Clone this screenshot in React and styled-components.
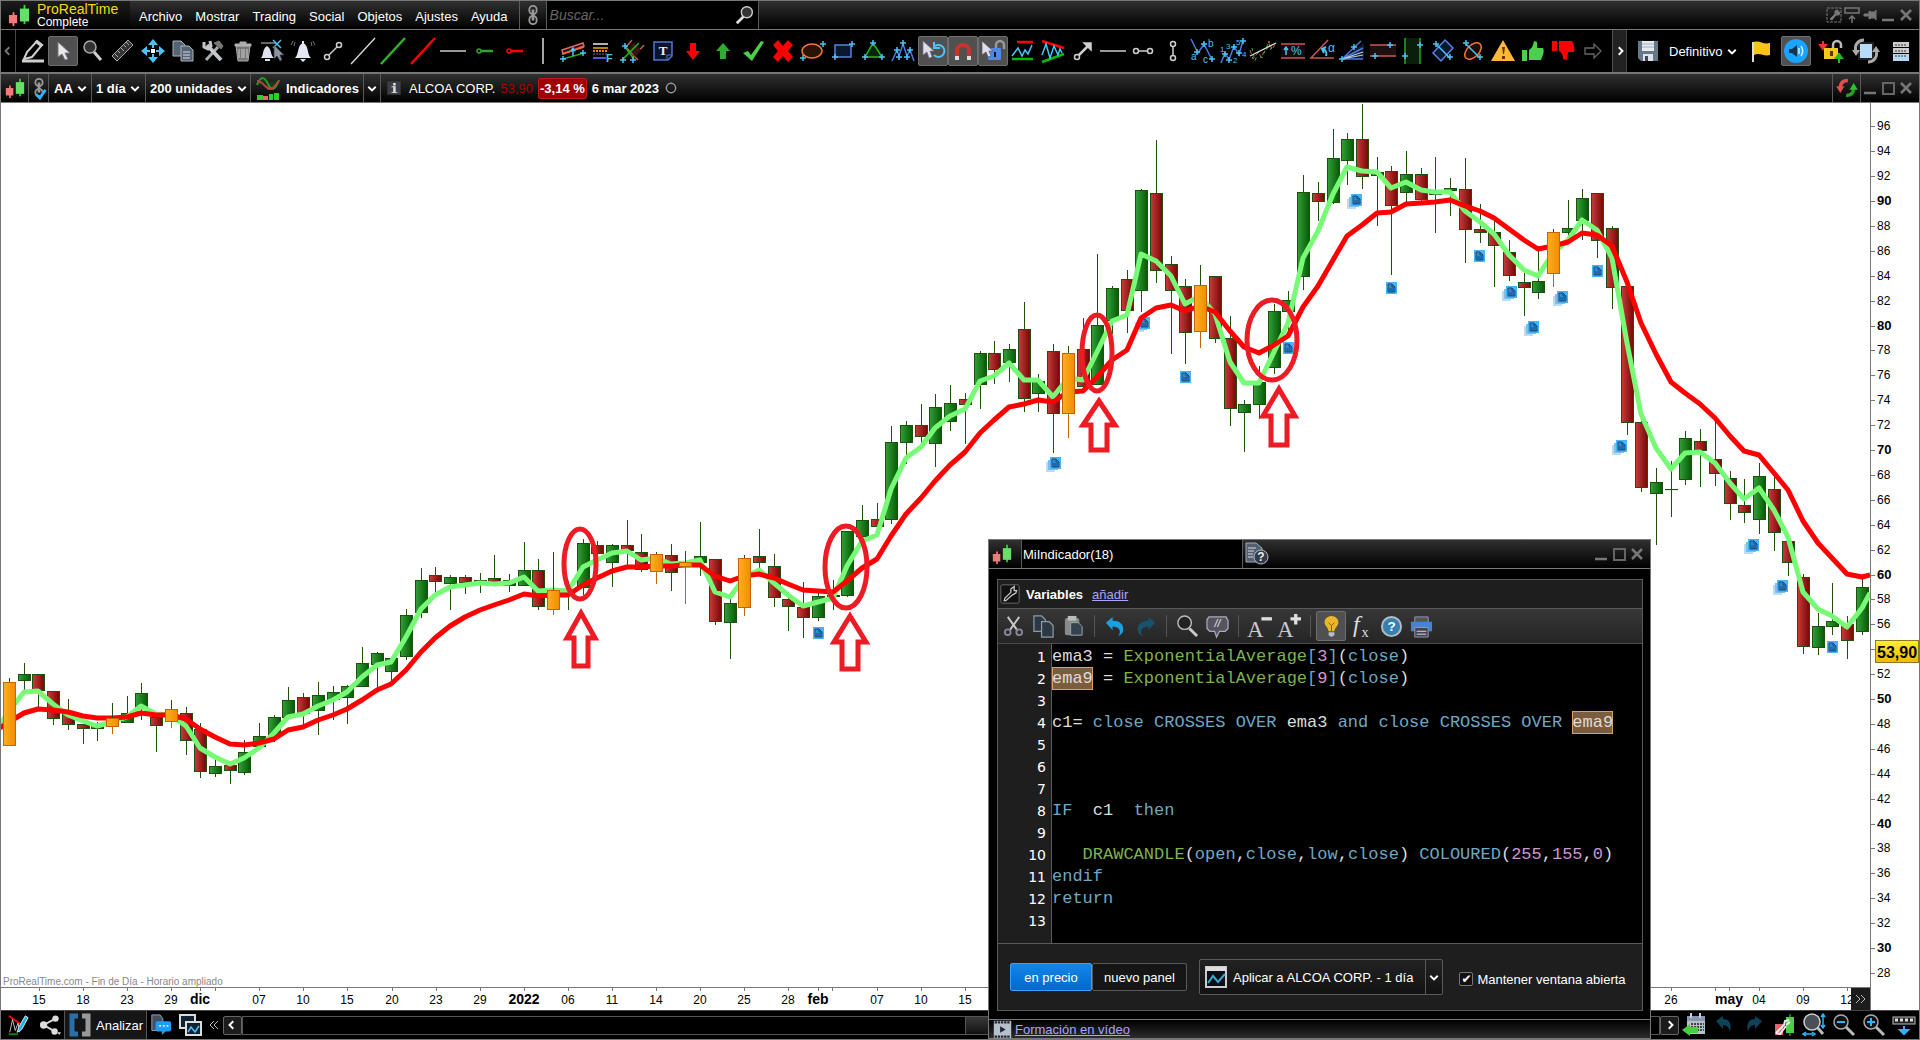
import React, { useState } from 'react';
import styled, { createGlobalStyle, css } from 'styled-components';

const GlobalStyle = createGlobalStyle`
  * {
    box-sizing: border-box;
  }
  body {
    margin: 0;
    background: #000;
    font-family: "Liberation Sans", Arial, sans-serif;
    font-size: 13px;
    color: #fff;
  }
  button, input, select {
    font: inherit;
    color: inherit;
  }
`;

const barGradient = 'linear-gradient(#303030, #000)';

/* ---------- icons ---------- */

const cyan = '#4cc4f5';
const grey = '#cfcfcf';
const steel = '#a9b3bd';

const Plus = ({ x, y }) => (
  <path d={`M${x - 3} ${y}h6M${x} ${y - 3}v6`} stroke={cyan} strokeWidth="1.5" />
);

const cursor = 'M7 3v15l4-3 3 6 3-1-3-6h5z';

const icons = {
  candles: (
    <>
      <path d="M6 9v15" stroke="#f77" strokeWidth="2" />
      <path d="M18 1v21" stroke="#3d3" strokeWidth="2" />
      <rect x="1" y="12" width="9" height="9" fill="#f27a7a" />
      <rect x="13" y="5" width="10" height="14" fill="#66e066" />
    </>
  ),
  chain: (
    <g fill="none" stroke="#999" strokeWidth="2">
      <rect x="8" y="2" width="8" height="9" rx="4" />
      <rect x="8" y="13" width="8" height="9" rx="4" />
      <path d="M12 6v12" strokeWidth="3" />
    </g>
  ),
  chainCheck: (
    <g fill="none" stroke="#999" strokeWidth="2">
      <rect x="8" y="2" width="8" height="8" rx="4" />
      <rect x="8" y="13" width="8" height="8" rx="4" />
      <path d="M12 6v11" strokeWidth="3" />
      <path d="M9 19l4 4 6-9" stroke="#2ab4ff" strokeWidth="3" />
    </g>
  ),
  search: (
    <>
      <path d="M11 13L3 21" stroke="#ddd" strokeWidth="3" />
      <circle cx="14" cy="9" r="6" fill="#333" stroke="#ccc" strokeWidth="1.5" />
    </>
  ),
  pencil: (
    <g fill="none" stroke={grey} strokeWidth="2">
      <path d="M3 20l3-7L16 2l5 4-10 12z" />
      <path d="M15 3l5 4 1-1-5-4z" fill={grey} />
      <path d="M1 22h22" strokeWidth="3" />
    </g>
  ),
  pointer: <path d={cursor} fill="#e8e8ee" stroke="#777" />,
  loupe: (
    <>
      <path d="M13 13l7 8" stroke={grey} strokeWidth="3" />
      <circle cx="9" cy="8" r="6" fill="#333" stroke="#aaa" strokeWidth="1.5" />
    </>
  ),
  ruler: (
    <g fill="#333" stroke="#aaa">
      <path d="M1 17L17 1l5 5L6 22z" />
      <path d="M4 15l3 3M7 12l2 2M10 9l3 3M13 6l2 2M15 3l3 3" />
    </g>
  ),
  move: (
    <g fill={cyan}>
      <path d="M12 0l5 6H7zM12 24l5-6H7zM0 12l6-5v10zM24 12l-6-5v10z" />
      <path d="M11 5h2v4h-2zM11 15h2v4h-2zM5 11h4v2H5zM15 11h4v2h-4z" />
      <rect x="10" y="10" width="4" height="4" fill="#fff" />
    </g>
  ),
  copy: (
    <g fill="#566373" stroke={steel}>
      <path d="M2 2h8l4 4v11H2z" />
      <path d="M10 7h8l4 4v11H10z" />
      <path d="M12 13h7M12 16h7M12 19h7" stroke="#dde" />
    </g>
  ),
  tools: (
    <g stroke="#aaa" strokeWidth="3" fill="none">
      <path d="M5 21L17 8" />
      <path d="M6 6l14 15" strokeWidth="4" stroke="#c4c8cc" />
      <path d="M13 4l7 6 2-3-4-5z" fill="#777" stroke="#777" strokeWidth="1" />
      <path d="M3 3v5l4 2 3-3-1-5" stroke="#c4c8cc" />
    </g>
  ),
  trash: (
    <g fill="#777" stroke="#aaa">
      <path d="M5 7h14l-2 15H7z" />
      <path d="M8 10v9M11 10v9M13 10v9M16 10v9" stroke="#ccc" />
      <path d="M4 5h16v2H4zM9 3h6v2H9z" fill="#bbb" />
    </g>
  ),
  alarm: (
    <>
      <path d="M0 4h15" stroke="#ccc" />
      <path d="M12 1l8 8M20 1l-8 8" stroke={cyan} strokeWidth="1.5" />
      <path d="M0 19c3-3 1-9 6-12 5 3 3 9 7 12zM4 20h5v2H4z" fill="#dfe3ee" />
      <path d="M13 6v14l3-3 3 5 2-1-2-5h4z" fill="#8a94a4" stroke="#333" strokeWidth=".7" />
    </>
  ),
  bell: (
    <>
      <path d="M4 19c4-3 2-13 8-15 6 2 4 12 8 15zM9 20h6l-3 3zM11 2h2v3h-2z" fill="#e3e8f2" />
      <path d="M4 3L3 7M2 2L0 6M20 3l1 4M22 2l2 4" stroke="#777" />
    </>
  ),
  node: (
    <g fill="none" stroke={grey} strokeWidth="1.5">
      <circle cx="6" cy="18" r="2.5" />
      <circle cx="18" cy="6" r="2.5" />
      <path d="M8 16l8-8" />
    </g>
  ),
  line: <path d="M0 25L24-1" stroke="#ddd" strokeWidth="1.3" />,
  greenLine: <path d="M0 25L24-1" stroke="#2fb02f" strokeWidth="2.5" />,
  redLine: <path d="M0 25L24-1" stroke="#f00" strokeWidth="2.5" />,
  hline: <path d="M-1 12h26" stroke="#ccc" strokeWidth="1.5" />,
  greenRay: (
    <g stroke="#2fa52f" strokeWidth="1.5" fill="none">
      <circle cx="8" cy="12" r="2" />
      <path d="M10 12h12" strokeWidth="2.5" />
    </g>
  ),
  redRay: (
    <g stroke="#f00" strokeWidth="1.5" fill="none">
      <circle cx="8" cy="12" r="2" />
      <path d="M10 12h12" strokeWidth="2.5" />
    </g>
  ),
  separator: <path d="M12-1v26" stroke="#ddd" strokeWidth="1.5" />,
  channel: (
    <g fill="none" strokeWidth="1.5">
      <path d="M1 11l21-7 1 3L2 15z" fill="#2a1112" stroke="#d66" />
      <path d="M1 15l22-7" stroke="#f63" />
      <path d="M2 20l21-6" stroke="#2a2" />
      <path d="M12 17V9m-2 3l2-3 2 3" stroke={cyan} />
      <Plus x={2} y={20} />
      <Plus x={22} y={14} />
    </g>
  ),
  fibo: (
    <>
      <path d="M2 5h15" stroke="#eee" strokeWidth="1.5" />
      <path d="M2 8h15v2H2z" fill="#a80" />
      <path d="M2 12h15" stroke="#f73" strokeDasharray="2 1" strokeWidth="2" />
      <path d="M2 15h15" stroke="#777" strokeDasharray="2 1" />
      <path d="M2 19h13" stroke="#55d" strokeWidth="2" />
      <text x="15" y="23" fill={cyan} fontSize="11" fontWeight="bold">F</text>
    </>
  ),
  pitchfork: (
    <g fill="none" strokeWidth="1.5">
      <path d="M5 8l6-7M11 19l12-13M5 8l12 13" stroke="#c55" />
      <path d="M8 9l5-6 7 8-6 7z" fill="#351516" />
      <path d="M1 21L18 4M4 8l9 12" stroke="#2b2" />
      <Plus x={4} y={7} />
      <Plus x={2} y={21} />
      <Plus x={12} y={21} />
    </g>
  ),
  textBox: (
    <>
      <path d="M3 3h18v14l-4 4H3z" fill="#0a1430" stroke="#5078c8" strokeWidth="1.5" />
      <path d="M21 16h-5v5" fill="none" stroke="#5078c8" />
      <text x="12" y="16" fill="#eee" fontSize="13" fontWeight="bold" textAnchor="middle" fontFamily="Liberation Serif">T</text>
    </>
  ),
  arrowDown: <path d="M9 4h6v8h4l-7 9-7-9h4z" fill="#f00" />,
  arrowUp: <path d="M9 20h6v-8h4l-7-8-7 8h4z" fill="#2fae2f" />,
  check: <path d="M2 14l5-2 3 4L20 2l3 1-12 19z" fill="#4ccf4c" />,
  cross: <path d="M2 6l5-5 5 6 5-6 5 5-5 6 5 6-5 5-5-6-5 6-5-5 5-6z" fill="#f00" />,
  ellipse: (
    <>
      <ellipse cx="11" cy="12" rx="10" ry="7" fill="#291305" stroke="#f07830" strokeWidth="1.5" />
      <Plus x={22} y={5} />
      <Plus x={2} y={19} />
    </>
  ),
  rect: (
    <>
      <rect x="4" y="6" width="16" height="12" fill="#0c1830" stroke="#5882e0" strokeWidth="1.5" />
      <Plus x={21} y={5} />
      <Plus x={4} y={18} />
    </>
  ),
  triangle: (
    <>
      <path d="M12 4l9 14H4z" fill="#0c220c" stroke="#2b2" strokeWidth="1.5" />
      <Plus x={12} y={4} />
      <Plus x={4} y={18} />
      <Plus x={21} y={18} />
    </>
  ),
  peaks: (
    <>
      <path d="M1 22l5-11 2 6 4-12 4 12 3-6 4 11" fill="none" stroke="#4a7ae0" strokeWidth="1.5" />
      <Plus x={12} y={4} />
      <Plus x={6} y={11} />
      <Plus x={19} y={11} />
      <Plus x={8} y={18} />
      <Plus x={16} y={18} />
    </>
  ),
  cursorBack: (
    <>
      <path d="M2 2v14l4-3 2 6 3-1-2-6h4z" fill="#dde" stroke="#777" strokeWidth=".7" />
      <path d="M14 7a6 6 0 1 1-1 9M13 3v6h6" fill="none" stroke={cyan} strokeWidth="2" />
    </>
  ),
  magnet: (
    <>
      <path d="M6 20v-8a6 6 0 0 1 12 0v8" fill="none" stroke="#c8342c" strokeWidth="4" />
      <path d="M4 17h4v4H4zM16 17h4v4h-4z" fill="#ddd" />
    </>
  ),
  cursorLock: (
    <>
      <path d="M15 9V6a4 4 0 0 1 8 0v4" fill="none" stroke="#999" strokeWidth="2.5" />
      <rect x="7" y="9" width="13" height="12" rx="1" fill="#4d8ae8" />
      <path d="M1 2v14l4-3 2 5 3-1-2-5h4z" fill="#dde" stroke="#555" strokeWidth=".7" />
      <path d="M13 13h2v5h-2z" fill="#012" />
    </>
  ),
  range: (
    <>
      <path d="M6 3h16" stroke="#f00" strokeWidth="2.5" />
      <path d="M1 20h21" stroke="#0b0" strokeWidth="2.5" />
      <path d="M1 17l6-8 4 8 3-6 3 4 4-9" fill="none" stroke={cyan} strokeWidth="1.5" />
    </>
  ),
  wedge: (
    <>
      <path d="M1 2l22 7" stroke="#f00" strokeWidth="2.5" />
      <path d="M1 23l22-8" stroke="#0b0" strokeWidth="2.5" />
      <path d="M1 16L5 5l4 14 4-12 4 9 2-6 2 4" fill="none" stroke={cyan} strokeWidth="1.5" />
    </>
  ),
  arrow: (
    <g stroke={grey} fill="none" strokeWidth="1.5">
      <circle cx="6" cy="18" r="2.5" />
      <path d="M8 16l9-9" strokeWidth="2.5" />
      <path d="M13 4h7v7z" fill={grey} />
    </g>
  ),
  segment: (
    <g stroke={grey} fill="none" strokeWidth="1.5">
      <circle cx="5" cy="12" r="2.5" />
      <circle cx="19" cy="12" r="2.5" />
      <path d="M8 12h8" />
    </g>
  ),
  vsegment: (
    <g stroke={grey} fill="none" strokeWidth="1.5">
      <circle cx="12" cy="5" r="2.5" />
      <circle cx="12" cy="19" r="2.5" />
      <path d="M12 8v8" />
    </g>
  ),
  abc: (
    <>
      <path d="M0 0l7 14 6-9 8 16" fill="none" stroke="#4a7ae0" strokeWidth="1.5" />
      <Plus x={6} y={13} />
      <Plus x={13} y={5} />
      <Plus x={21} y={20} />
      <g fill={cyan} fontSize="10">
        <text x="0" y="21">a</text>
        <text x="17" y="8">b</text>
        <text x="12" y="24">c</text>
      </g>
    </>
  ),
  waves: (
    <>
      <path d="M0 24l4-10 4 7 5-14 5 9 4-15" fill="none" stroke="#4a7ae0" strokeWidth="1.5" />
      <Plus x={4} y={15} />
      <Plus x={8} y={21} />
      <Plus x={13} y={8} />
      <Plus x={18} y={14} />
      <Plus x={22} y={2} />
      <g fill={cyan} fontSize="8">
        <text x="-1" y="13">1</text>
        <text x="5" y="10">3</text>
        <text x="12" y="24">2</text>
        <text x="15" y="6">5</text>
        <text x="21" y="18">4</text>
      </g>
    </>
  ),
  regression: (
    <>
      <path d="M-1 11l3 9 3-4 3-3 2 6 3-6 3-3 2-8 3 9 4-8" fill="none" stroke="#c55" strokeDasharray="4 3" />
      <path d="M1 9l3 13 3-9 4 6 4-10 3-6 1 8 4-6" fill="none" stroke="#3b3" strokeDasharray="3 4" />
      <path d="M-1 17L25 4" stroke="#ddd" strokeWidth="1.3" />
    </>
  ),
  percent: (
    <>
      <rect x="0" y="5" width="24" height="14" fill="#180a0a" />
      <path d="M0 5h24M0 19h24" stroke="#c55" strokeWidth="1.5" />
      <path d="M5 16V8m-2 3l2-3 2 3" fill="none" stroke={cyan} strokeWidth="1.5" />
      <text x="10" y="16" fontSize="12" fill={cyan}>%</text>
    </>
  ),
  angle: (
    <>
      <path d="M17 1L0 19h23" fill="none" stroke="#c55" strokeWidth="1.5" />
      <path d="M15 17c1-3 0-6-3-7m3-2l-4 2 2 4" fill="none" stroke={cyan} strokeWidth="2" />
      <text x="17" y="13" fontSize="12" fill={cyan}>α</text>
    </>
  ),
  fan: (
    <>
      <path d="M1 20L23 4v16z" fill="#0c1c30" />
      <path d="M1 20L20 2M1 20h21M1 20l21-11" stroke="#4a7ae0" strokeWidth="1.5" />
      <path d="M1 20l21-7M1 20l21-4" stroke="#bcd" strokeWidth="1.2" />
      <Plus x={1} y={20} />
      <Plus x={13} y={8} />
    </>
  ),
  hband: (
    <>
      <rect x="-1" y="6" width="26" height="11" fill="#1f1010" />
      <path d="M-1 6h26M-1 17h26" stroke="#c55" strokeWidth="1.5" />
      <Plus x={19} y={6} />
      <Plus x={4} y={17} />
    </>
  ),
  vband: (
    <>
      <rect x="4" y="-1" width="15" height="26" fill="#0a1f0a" />
      <path d="M4-1v26M19-1v26" stroke="#2a2" strokeWidth="1.5" />
      <Plus x={19} y={6} />
      <Plus x={4} y={17} />
    </>
  ),
  diamond: (
    <>
      <path d="M14 1l8 8-12 13-8-8z" fill="#0c1830" stroke="#5882e0" strokeWidth="1.5" />
      <path d="M5 5l14 14" stroke={cyan} strokeWidth="1.5" />
      <Plus x={5} y={5} />
      <Plus x={19} y={18} />
    </>
  ),
  tiltEllipse: (
    <>
      <ellipse cx="12" cy="12" rx="10" ry="6" transform="rotate(-45 12 12)" fill="#1c0d05" stroke="#f07830" strokeWidth="1.5" />
      <path d="M5 5l14 14" stroke={cyan} strokeWidth="1.5" />
      <Plus x={5} y={4} />
      <Plus x={19} y={18} />
    </>
  ),
  warning: (
    <>
      <path d="M12 1l12 21H0z" fill="#ffb838" />
      <path d="M11 8h3l-1 7h-1zM11 17h3v3h-3z" fill="#5a3800" />
    </>
  ),
  thumbUp: <path d="M1 11h5v11H1zM8 11c4-3 4-5 5-9l3 1v6h6c2 4-1 9-2 12H8z" fill="#4ccf4c" />,
  thumbDown: <path d="M1 2h5v10H1zM8 2h13c2 3 3 8 2 11h-6l-1 8-4-1c0-4-1-6-4-8z" fill="#f00" />,
  arrowOutline: <path d="M4 9h9V5l7 7-7 7v-4H4z" fill="none" stroke="#666" strokeWidth="1.3" />,
  floppy: (
    <>
      <path d="M2 2h20v20H5l-3-3z" fill="#68788a" />
      <path d="M6 2h12v10H6z" fill="#e8ecf0" />
      <path d="M6 5h12M6 8h12" stroke="#9ab" />
      <path d="M7 15h10v7H7z" fill="#dde4ea" />
      <path d="M9 17h3v5H9z" fill="#445" />
    </>
  ),
  flag: (
    <>
      <path d="M4 3v20" stroke="#ddd" strokeWidth="2" />
      <path d="M5 3c6-2 9 3 16 1v12c-6 2-10-3-16 0z" fill="#fcc419" />
    </>
  ),
  sound: (
    <>
      <circle cx="12" cy="12" r="12" fill="#1aa3ff" />
      <path d="M5 10h3l5-4v12l-5-4H5z" fill="#13324f" />
      <path d="M15 9v6M17 7c2 3 2 7 0 10" fill="none" stroke="#d8f0ff" strokeWidth="1.5" />
    </>
  ),
  lockArrows: (
    <>
      <path d="M4 2v7M1 6l3 4 3-4z" stroke="#e33" fill="#e33" strokeWidth="2" />
      <path d="M14 9V6a4 4 0 0 1 8 0v3" fill="none" stroke="#bbb" strokeWidth="2.5" />
      <rect x="5" y="9" width="14" height="11" fill="#f7c81c" />
      <path d="M11 12h3v5h-3z" fill="#630" />
      <path d="M20 24v-8m-3 3l3-4 3 4z" stroke="#2b2" fill="#2b2" strokeWidth="2" />
    </>
  ),
  syncPage: (
    <>
      <rect x="5" y="4" width="14" height="16" fill="#b8dcf8" stroke="#222" strokeWidth="2" />
      <path d="M2 13C0 6 4 1 10 1M22 11c2 7-2 12-8 12" fill="none" stroke="#aaa" strokeWidth="3" />
      <path d="M-2 11h8l-4 6zM26 13h-8l4-6z" fill="#aaa" />
    </>
  ),
  keypad: (
    <>
      <path d="M4 3h16v5H4zM4 9h16v5H4z" fill="#ccc" />
      <path d="M4 15h16v7H4z" fill="#b6d8f4" />
      <path d="M6 6h12M6 12h12M6 17h12" stroke="#333" strokeDasharray="2 1" />
    </>
  ),
  indicators: (
    <>
      <path d="M1 9C5-1 9 1 12 8s7 7 11-4" fill="#153a15" stroke="#2a9a2a" strokeWidth="2" />
      <path d="M1 5c5 0 8 6 12 8 4 1 7-5 10-8" fill="none" stroke="#b84040" strokeWidth="2" />
      <path d="M1 19h6v5H1zM13 18h4v6h-4zM18 17h5v7h-5z" fill="#2ecc2e" />
      <path d="M7 20h5v4H7z" fill="#e66" />
    </>
  ),
  info: (
    <>
      <rect x="4" y="4" width="16" height="16" fill="#3e3e48" />
      <path d="M11 6h3v3h-3zM9 10h5v7h2v1H9v-1h2v-6H9z" fill="#ddd" />
    </>
  ),
  ring: <circle cx="12" cy="12" r="8" fill="none" stroke="#999" strokeWidth="2.5" />,
  refresh: (
    <>
      <path d="M4 12c0-6 3-9 9-9" fill="none" stroke="#e05050" strokeWidth="4" />
      <path d="M-1 10h10l-5 8z" fill="#e05050" />
      <path d="M20 12c0 6-3 9-9 9" fill="none" stroke="#22a322" strokeWidth="4" />
      <path d="M25 14H15l5-8z" fill="#2fc02f" />
    </>
  ),
  adjust: (
    <g fill="none" stroke="#777">
      <rect x="5" y="5" width="14" height="14" strokeDasharray="3 1" />
      <path d="M8 16l5-5v-3l3-1v2h2l-1 3h-3l-4 5z" fill="#777" />
    </g>
  ),
  dock: (
    <g fill="none" stroke="#777" strokeWidth="1.5">
      <rect x="5" y="5" width="14" height="5" />
      <path d="M12 20v-7m-3 3l3-3 3 3" />
    </g>
  ),
  pin: <path d="M6 11h5V8l2 1h4l1-2v10l-1-2h-4l-2 1v-3H6z" fill="#777" stroke="#777" />,
  minimize: <path d="M6 17h12" stroke="#777" strokeWidth="2.5" />,
  maximize: <rect x="7" y="7" width="11" height="11" fill="none" stroke="#666" strokeWidth="2" />,
  close: <path d="M7 7l10 10M17 7L7 17" stroke="#777" strokeWidth="2.5" />,
  chartPen: (
    <>
      <path d="M2 2l14 10" stroke="#f00" strokeWidth="2" />
      <path d="M3 20L6 6l3 12 3-8 2 10" fill="none" stroke="#ccc" />
      <path d="M2 22h10" stroke="#080" strokeWidth="2" />
      <path d="M11 20l2-6 7-12 3 2-7 13z" fill="#19b3e6" stroke="#eee" />
    </>
  ),
  share: (
    <>
      <path d="M18 5L5 12l12 7" fill="none" stroke="#ddd" strokeWidth="2" />
      <circle cx="18" cy="5" r="3.5" fill="#ddd" />
      <circle cx="5" cy="12" r="4" fill="#ddd" />
      <circle cx="17" cy="19" r="3.5" fill="#ddd" />
      <path d="M20 20h4l-2 3z" fill="#ddd" />
    </>
  ),
  brackets: (
    <g fill="none" strokeWidth="5">
      <path d="M10 3H4v18h6" stroke="#2a6fa8" />
      <path d="M14 3h6v18h-6" stroke="#999" />
    </g>
  ),
  chat: (
    <>
      <path d="M2 1h9l3 4v13H2z" fill="#445060" stroke="#9ab" />
      <path d="M8 8h13q2 0 2 2v7q0 2-2 2h-4l-4 4v-4H8q-2 0-2-2v-7q0-2 2-2z" fill="#1f9cf5" />
      <path d="M10 13h10" stroke="#cef" strokeWidth="2" strokeDasharray="2 2" />
    </>
  ),
  windows: (
    <>
      <rect x="2" y="2" width="15" height="13" fill="#123" stroke="#ddd" strokeWidth="2" />
      <rect x="8" y="9" width="15" height="13" fill="#123" stroke="#ddd" strokeWidth="2" />
      <path d="M10 19l3-5 4 5 4-6" fill="none" stroke={cyan} strokeWidth="1.5" />
    </>
  ),
  chartWindow: (
    <>
      <rect x="2" y="2" width="20" height="20" fill="#0b0f14" stroke="#ccc" strokeWidth="2" />
      <path d="M2 2h20v4H2z" fill="#ddd" />
      <path d="M4 18l5-7 5 6 7-8" fill="none" stroke="#3aa8d0" strokeWidth="2" />
    </>
  ),
  calendar: (
    <>
      <path d="M5 3h18v18H5z" fill="#b8bfc8" />
      <path d="M5 3h18v5H5z" fill="#8898ac" />
      <path d="M9 11h13M9 14h13M9 17h13" stroke="#444" strokeDasharray="2 1" strokeWidth="2" />
      <path d="M9 0v5M18 0v5" stroke="#ccd" strokeWidth="2" />
      <path d="M0 17l8-6v3h8v6H8v3z" fill="#43d143" />
    </>
  ),
  undoDark: <path d="M4 8l7-5v3c6 0 9 4 7 13-1-5-3-7-7-7v4z" fill="#0d4358" />,
  redoDark: <path d="M20 8l-7-5v3C7 6 4 10 6 19c1-5 3-7 7-7v4z" fill="#0d4358" />,
  candleTool: (
    <>
      <path d="M3 11h8v11H3z" fill="#d66" />
      <path d="M14 4h8v16h-8z" fill="#46d146" />
      <path d="M18 1v22" stroke="#46d146" />
      <path d="M4 20l8-8 1-4 4-1m-3 5l4-3M4 20l4 1 6-8" fill="none" stroke="#eee" strokeWidth="2" />
    </>
  ),
  zoomAxes: (
    <>
      <path d="M15 14l6 7" stroke="#bbb" strokeWidth="3" />
      <circle cx="10" cy="9" r="8" fill="#4a4e55" stroke="#ccc" strokeWidth="1.5" />
      <path d="M21 2v12M19 4l2-3 2 3M19 12l2 3 2-3M2 21h9M4 19l-3 2 3 2M10 19l3 2-3 2" fill="none" stroke="#29b6ff" strokeWidth="1.5" />
    </>
  ),
  zoomOut: (
    <>
      <path d="M14 14l8 8" stroke="#bbb" strokeWidth="3" />
      <circle cx="9" cy="9" r="7" fill="#111" stroke="#aaa" strokeWidth="1.5" />
      <path d="M5 9h8" stroke="#29b6ff" strokeWidth="2" />
    </>
  ),
  zoomIn: (
    <>
      <path d="M14 14l8 8" stroke="#bbb" strokeWidth="3" />
      <circle cx="9" cy="9" r="7" fill="#111" stroke="#aaa" strokeWidth="1.5" />
      <path d="M5 9h8M9 5v8" stroke="#29b6ff" strokeWidth="2" />
    </>
  ),
  keyboardDown: (
    <>
      <rect x="1" y="4" width="22" height="7" fill="#222" stroke="#bbb" />
      <path d="M3 7h18" stroke="#ddd" strokeWidth="3" strokeDasharray="3 2" />
      <path d="M12 13v5m-4-1l4 4 4-4z" stroke="#29b6ff" fill="#29b6ff" strokeWidth="2" />
    </>
  ),
  help: (
    <>
      <path d="M1 1h10l6 5v14H1z" fill="#56606c" stroke="#9ab" />
      <path d="M3 6h8M3 9h6M3 12h5M3 15h5" stroke="#cde" />
      <circle cx="16" cy="15" r="7" fill="#333b46" stroke="#bbc" />
      <text x="16" y="19" fontSize="12" fill="#eee" textAnchor="middle" fontWeight="bold">?</text>
    </>
  ),
  wrench: (
    <>
      <rect x="1" y="1" width="22" height="22" rx="2" fill="#111" stroke="#777" />
      <path d="M5 20l1-3 7-7V6l4-3v5h3l-1 3-4 2-8 7z" fill="none" stroke="#ccc" strokeWidth="1.5" />
    </>
  ),
  scissors: (
    <g fill="none" stroke="#c8c8c8" strokeWidth="2">
      <path d="M6 2l10 14M18 2L8 16" />
      <circle cx="6" cy="18" r="3" stroke="#889" />
      <circle cx="18" cy="18" r="3" stroke="#889" />
    </g>
  ),
  copyDark: (
    <g fill="#2c3844" stroke="#8d99a5" strokeWidth="1.3">
      <path d="M2 1h8l4 4v12H2z" />
      <path d="M10 7h8l4 4v12H10z" />
    </g>
  ),
  paste: (
    <>
      <rect x="3" y="3" width="15" height="18" rx="2" fill="#888" />
      <path d="M6 1h9v5H6z" fill="#bbb" />
      <path d="M9 8h8l4 4v9H9z" fill="#34414e" stroke="#9aa" />
    </>
  ),
  undo: <path d="M2 8l7-6v4c7 0 12 3 11 11-1 3-3 4-5 5 4-6 0-10-6-10v4z" fill="#1a9fe0" />,
  redo: <path d="M22 8l-7-6v4C8 6 3 9 4 17c1 3 3 4 5 5-4-6 0-10 6-10v4z" fill="#17536c" />,
  magnifier: (
    <>
      <path d="M14 14l8 8" stroke="#ccc" strokeWidth="3" />
      <circle cx="9" cy="8" r="7" fill="#222" stroke="#bbb" strokeWidth="1.5" />
    </>
  ),
  comment: (
    <>
      <path d="M3 2h18l2 4v8l-3 3h-6l-3 6-2-6H4l-3-3V5z" fill="#55555f" stroke="#aab" strokeWidth="1.3" />
      <text x="12" y="13" fontSize="11" fill="#eee" textAnchor="middle" fontStyle="italic">//</text>
    </>
  ),
  fontDown: (
    <>
      <text x="-1" y="23" fontSize="24" fill="#c8c8d4" fontFamily="Liberation Serif">A</text>
      <path d="M14 4h11" stroke="#ddd" strokeWidth="3.5" />
    </>
  ),
  fontUp: (
    <>
      <text x="-1" y="23" fontSize="24" fill="#c8c8d4" fontFamily="Liberation Serif">A</text>
      <path d="M13 4h11M18.5-1v11" stroke="#ddd" strokeWidth="3.5" />
    </>
  ),
  bulb: (
    <>
      <path d="M12 1c-5 0-8 4-7 8 1 3 4 5 4 8h6c0-3 3-5 4-8 1-4-2-8-7-8z" fill="#eab62c" />
      <path d="M9 8l3 3 3-3M12 11v6" fill="none" stroke="#8a5a00" />
      <path d="M9 18h6v3l-3 2-3-2z" fill="#b8bccc" />
    </>
  ),
  fx: (
    <g fill="#ddd" fontFamily="Liberation Serif">
      <text x="3" y="18" fontSize="25" fontStyle="italic">f</text>
      <text x="12" y="23" fontSize="15">x</text>
    </g>
  ),
  question: (
    <>
      <circle cx="12" cy="12" r="10" fill="#3580b0" stroke="#b0bcc6" strokeWidth="2" />
      <text x="12" y="17" fontSize="14" fill="#fff" textAnchor="middle" fontWeight="bold">?</text>
    </>
  ),
  printer: (
    <>
      <path d="M5 2h14v6H5z" fill="#555" stroke="#99a" />
      <path d="M1 7h22v10H1z" fill="#3f86d8" />
      <path d="M5 13h14v10H5z" fill="#445" stroke="#99a" />
      <path d="M7 17h10M7 20h10" stroke="#ddd" />
    </>
  ),
  film: (
    <>
      <rect x="1" y="1" width="22" height="22" fill="#b4c0ca" />
      <path d="M2 3h20M2 21h20" stroke="#223" strokeWidth="3" strokeDasharray="3 1" />
      <path d="M9 8l7 4-7 4z" fill="#223" />
    </>
  ),
};

const Svg = styled.svg`
  display: block;
  flex: none;
  overflow: visible;
`;

const Icon = ({ name, size = 24 }) => (
  <Svg viewBox="0 0 24 24" width={size} height={size} aria-hidden="true">
    {icons[name]}
  </Svg>
);

const Chevron = ({ d = 'M1 3l3 3 3-3', color = '#fff' }) => (
  <Svg viewBox="0 0 8 8" width="10" height="10" aria-hidden="true">
    <path d={d} fill="none" stroke={color} strokeWidth="1.5" />
  </Svg>
);

/* ---------- shell ---------- */

const Frame = styled.div`
  position: relative;
  display: flex;
  flex-direction: column;
  height: 100vh;
  border: 1px solid #777;
  overflow: hidden;
`;

const MenuBar = styled.header`
  display: flex;
  align-items: stretch;
  height: 29px;
  background: ${barGradient};
  border-bottom: 1px solid #777;
`;

const Brand = styled.div`
  display: flex;
  align-items: center;
  gap: 7px;
  width: 129px;
  padding-left: 7px;
  background: linear-gradient(#1c1c1c, #000);
`;

const BrandName = styled.div`
  display: flex;
  flex-direction: column;
  font-size: 14px;
  line-height: 14px;
  color: #f2dc00;

  small {
    font-size: 12px;
    line-height: 12px;
    color: #fff;
  }
`;

const Menu = styled.nav`
  display: flex;
  align-items: center;
  gap: 13px;
  padding: 0 11px 0 9px;
`;

const MenuItem = styled.button`
  padding: 2px 0 0;
  border: 0;
  background: none;
`;

const IconButton = styled.button`
  display: flex;
  align-items: center;
  justify-content: center;
  flex: none;
  width: ${p => p.$w || 30}px;
  height: ${p => p.$h || 30}px;
  padding: 0;
  border: 1px solid transparent;
  border-radius: 2px;
  background: none;
  ${p => p.$on && css`
    background: #505050;
    border-color: #6e6e6e;
  `}
`;

const Cell = styled.div`
  display: flex;
  align-items: center;
  justify-content: center;
  gap: 6px;
  padding: ${p => p.$pad || '0'};
  width: ${p => (p.$w ? p.$w + 'px' : 'auto')};
  border-right: 1px solid #5a5a5a;
`;

const Search = styled.label`
  display: flex;
  align-items: center;
  justify-content: space-between;
  width: 212px;
  padding: 0 2px 0 3px;
  background: #000;
  border-right: 1px solid #5a5a5a;

  input {
    flex: 1;
    min-width: 0;
    padding: 0;
    border: 0;
    outline: 0;
    background: none;
    font-size: 14px;
    font-style: italic;
  }
  input::placeholder {
    color: #666;
  }
`;

const WindowControls = styled.div`
  display: flex;
  margin-left: auto;
  padding-right: 4px;
`;

const Toolbar = styled.div`
  display: flex;
  align-items: center;
  height: 44px;
  background: #000;
  border-bottom: 2px solid #777;
`;

const ScrollTools = styled.button`
  display: flex;
  align-items: center;
  justify-content: center;
  flex: none;
  align-self: stretch;
  width: 15px;
  padding: 0;
  border: 0;
  border-right: 1px solid #444;
  background: ${p => (p.$raised ? '#222' : 'none')};
  ${p => p.$raised && 'border-left: 1px solid #555;'}
`;

const Tools = styled.div`
  display: flex;
  flex: 1;
  min-width: 0;
  padding-left: 2px;
  overflow: hidden;
`;

const PlatformTools = styled.div`
  display: flex;
  gap: 5px;
  padding: 0 3px 0 9px;
`;

const Picker = styled.span`
  display: flex;
  align-items: center;
  gap: 4px;

  select {
    appearance: none;
    padding: 0;
    border: 0;
    outline: 0;
    background: none;
    font-weight: ${p => (p.$bold ? 'bold' : 'normal')};
  }
`;

const ChartHeader = styled.div`
  display: flex;
  height: 29px;
  background: ${barGradient};
  border-bottom: 1px solid #777;
`;

const Quote = styled.div`
  display: flex;
  align-items: center;
  gap: 5px;
  padding-left: 3px;
  white-space: nowrap;
`;

const Last = styled.span`
  color: #a80000;
`;

const Change = styled.b`
  padding: 2px 1px;
  border: 1px solid #c01818;
  border-radius: 2px;
  background: #a00000;
`;

const ChartArea = styled.main`
  flex: 1;
  min-height: 0;
  background: #fff;

  svg {
    display: block;
    width: 100%;
    height: 100%;
  }
  text {
    font-size: 12px;
  }
`;

const BottomBar = styled.footer`
  display: flex;
  align-items: center;
  flex: none;
  height: 29px;
  background: #000;
  border-top: 1px solid #444;
`;

const Analyze = styled.button`
  display: flex;
  align-items: center;
  align-self: stretch;
  gap: 4px;
  padding: 0 3px;
  border: 0;
  border-left: 1px solid #555;
  border-right: 1px solid #555;
  background: #161616;
`;

const Track = styled.div`
  display: flex;
  flex: 1;
  height: 19px;
  border: 1px solid #555;
`;

const Thumb = styled.div`
  margin-left: 51%;
  width: 48%;
  border-left: 1px solid #555;
  background: linear-gradient(#3a3a3a, #111);
`;

const TrackButton = styled.button`
  display: flex;
  align-items: center;
  justify-content: center;
  flex: none;
  width: 19px;
  height: 19px;
  padding: 0;
  border: 1px solid #666;
  border-radius: 2px;
  background: #1c1c1c;
`;

/* ---------- chart ---------- */

// [kind, high, body top, body bottom, low]
const candles = [
  ['o', 678, 682, 746, 746], ['g', 663, 674, 681, 693], ['r', 674, 674, 691, 707], ['r', 691, 691, 719, 725],
  ['r', 699, 713, 725, 730], ['r', 724, 724, 729, 744], ['g', 722, 725, 729, 741], ['o', 703, 718, 727, 734],
  ['g', 696, 713, 723, 723], ['g', 683, 693, 708, 720], ['r', 713, 717, 726, 752], ['o', 700, 709, 722, 728],
  ['r', 707, 713, 741, 755], ['r', 723, 729, 772, 778], ['g', 759, 766, 774, 777], ['r', 765, 765, 771, 784],
  ['g', 740, 752, 773, 775], ['g', 723, 736, 747, 747], ['g', 715, 717, 736, 742], ['g', 687, 700, 718, 719],
  ['r', 693, 697, 714, 727], ['g', 682, 695, 711, 735], ['g', 686, 692, 700, 720], ['g', 685, 686, 698, 724],
  ['g', 647, 663, 687, 687], ['g', 652, 653, 665, 688], ['g', 657, 658, 672, 684], ['g', 609, 615, 657, 660],
  ['g', 568, 580, 613, 618], ['r', 567, 575, 582, 593], ['g', 575, 577, 584, 610], ['r', 575, 577, 583, 594],
  ['g', 573, 580, 585, 593], ['r', 555, 578, 582, 586], ['g', 574, 580, 586, 592], ['g', 542, 570, 586, 586],
  ['r', 559, 570, 607, 610], ['o', 552, 590, 610, 615], ['g', 581, 593, 595, 610], ['g', 539, 543, 588, 595],
  ['r', 541, 545, 554, 555], ['g', 544, 545, 563, 587], ['r', 520, 545, 551, 567], ['r', 534, 552, 570, 572],
  ['o', 552, 554, 572, 584], ['r', 544, 555, 573, 591], ['o', 551, 562, 567, 604], ['g', 522, 556, 563, 576],
  ['r', 559, 559, 622, 625], ['g', 597, 603, 623, 659], ['o', 555, 558, 608, 616], ['r', 529, 556, 563, 572],
  ['r', 554, 566, 598, 607], ['r', 592, 599, 607, 631], ['r', 582, 607, 618, 638], ['g', 593, 596, 618, 621],
  ['r', 580, 595, 597, 610], ['g', 531, 531, 596, 597], ['g', 505, 520, 537, 542], ['r', 503, 519, 527, 537],
  ['g', 426, 442, 520, 524], ['g', 421, 425, 443, 464], ['r', 404, 425, 437, 448], ['g', 394, 407, 444, 467],
  ['g', 385, 403, 422, 431], ['r', 393, 399, 405, 444], ['g', 351, 353, 385, 409], ['r', 341, 353, 370, 384],
  ['g', 344, 349, 363, 382], ['r', 302, 329, 399, 412], ['g', 374, 381, 394, 412], ['r', 344, 351, 414, 453],
  ['o', 346, 353, 414, 438], ['r', 318, 349, 387, 388], ['g', 254, 325, 385, 385], ['g', 286, 288, 321, 334],
  ['r', 270, 279, 311, 333], ['g', 189, 190, 291, 312], ['r', 140, 193, 271, 283], ['r', 256, 264, 291, 354],
  ['r', 279, 286, 333, 364], ['o', 265, 285, 332, 348], ['r', 276, 276, 339, 343], ['r', 316, 338, 409, 426],
  ['g', 400, 404, 413, 452], ['g', 366, 382, 405, 419], ['g', 304, 311, 368, 374], ['g', 291, 300, 312, 334],
  ['g', 175, 192, 277, 290], ['r', 182, 193, 202, 221], ['g', 129, 158, 203, 204], ['g', 133, 139, 161, 185],
  ['r', 104, 139, 177, 189], ['g', 157, 172, 176, 226], ['r', 166, 171, 206, 275], ['g', 151, 174, 193, 204],
  ['r', 168, 174, 200, 201], ['g', 157, 193, 195, 233], ['g', 178, 188, 191, 216], ['r', 158, 189, 230, 263],
  ['r', 204, 229, 233, 243], ['r', 220, 232, 246, 287], ['r', 240, 252, 276, 281], ['r', 273, 282, 288, 316],
  ['g', 246, 281, 293, 299], ['o', 229, 232, 274, 287], ['g', 200, 228, 233, 240], ['g', 189, 198, 221, 240],
  ['r', 193, 193, 241, 258], ['r', 226, 228, 288, 309], ['r', 286, 286, 423, 435], ['r', 421, 422, 488, 492],
  ['g', 468, 482, 494, 545], ['g', 461, 489, 490, 517], ['g', 431, 438, 480, 485], ['r', 429, 441, 451, 487],
  ['r', 417, 459, 474, 486], ['r', 471, 478, 504, 520], ['r', 479, 505, 513, 523], ['g', 463, 476, 520, 534],
  ['r', 474, 489, 533, 551], ['r', 541, 541, 563, 576], ['r', 574, 577, 647, 654], ['g', 613, 626, 648, 655],
  ['g', 583, 621, 627, 635], ['r', 616, 624, 641, 659], ['g', 578, 587, 632, 635],
];

const ema3 = [
  711, 692, 691, 704, 715, 721, 726, 722, 717, 706, 714, 715, 726, 748, 757, 764, 758, 748, 733, 717, 714, 706, 700,
  692, 677, 665, 662, 637, 609, 595, 587, 585, 583, 584, 583, 577, 591, 590, 591, 567, 560, 553, 551, 560, 558, 564,
  563, 560, 592, 597, 578, 570, 583, 595, 606, 602, 598, 566, 541, 535, 489, 458, 447, 428, 416, 409, 381, 376, 363,
  380, 380, 397, 378, 380, 352, 321, 315, 254, 261, 276, 304, 296, 314, 362, 383, 383, 352, 323, 258, 231, 194, 167,
  171, 172, 188, 182, 190, 192, 192, 211, 222, 234, 255, 270, 276, 253, 240, 220, 230, 258, 343, 414, 448, 469, 453,
  452, 463, 483, 499, 488, 510, 537, 592, 609, 616, 627, 608,
];

const ema9 = [
  722, 713, 709, 710, 712, 716, 718, 718, 717, 713, 715, 715, 719, 729, 737, 744, 745, 743, 739, 730, 727, 720, 715,
  709, 700, 690, 684, 670, 652, 638, 626, 617, 610, 605, 600, 594, 596, 595, 595, 585, 578, 571, 567, 567, 566, 566,
  565, 565, 576, 581, 576, 574, 578, 584, 590, 591, 592, 581, 568, 559, 536, 514, 498, 481, 465, 452, 433, 420, 407,
  404, 400, 402, 392, 391, 377, 360, 350, 318, 308, 305, 311, 306, 312, 331, 347, 353, 345, 336, 307, 286, 260, 236,
  225, 213, 212, 204, 203, 202, 200, 206, 211, 218, 229, 240, 249, 246, 242, 233, 235, 246, 282, 323, 354, 382, 393,
  404, 418, 436, 451, 455, 473, 490, 521, 543, 558, 574, 577,
];

// [x, y, stacked]
const notes = [
  [818, 633], [1055, 463, true], [1144, 323, true], [1185, 377], [1288, 348], [1356, 200, true], [1391, 288],
  [1479, 256], [1511, 292, true], [1533, 327, true], [1562, 297, true], [1597, 271], [1621, 446, true],
  [1753, 545, true], [1782, 586, true], [1832, 647],
];

const circles = [[580, 564, 16, 35], [846, 567, 21, 41], [1097, 353, 15, 38], [1272, 340, 25, 40]];

// [tip x, tip y, shoulder y, bottom y, half head, half shaft]
const arrows = [
  [581, 613, 638, 666, 14, 7], [850, 616, 642, 669, 16, 8], [1099, 401, 425, 450, 16, 8], [1279, 389, 416, 445, 16, 8],
];

const days = [
  [39, '15'], [83, '18'], [127, '23'], [171, '29'], [200, 'dic', true], [215, ''], [259, '07'], [303, '10'],
  [347, '15'], [392, '20'], [436, '23'], [480, '29'], [524, '2022', true], [568, '06'], [612, '11'], [656, '14'],
  [700, '20'], [744, '25'], [788, '28'], [818, 'feb', true], [832, ''], [877, '07'], [921, '10'], [965, '15'],
  [1671, '26'], [1715, ''], [1729, 'may', true], [1759, '04'], [1803, '09'], [1847, '12'],
];

const prices = Array.from({ length: 35 }, (_, i) => 96 - i * 2);

const barX = i => Math.floor(9.55 + 14.705 * i);
const priceY = p => Math.round(201 + (90 - p) * 12.45);

const toPoints = (values, first, last) =>
  [`0,${first}`, ...values.map((v, i) => `${barX(i)},${v}`), `1870,${last}`].join(' ');

const edge = { g: '#1d520a', r: '#1d520a', o: '#c86400' };

const Candle = ({ data, i }) => {
  const [kind, high, top, bottom, low] = data;
  const x = barX(i);
  return (
    <g>
      <path d={`M${x + 0.5} ${high}V${top}`} stroke="#1d520a" />
      <path d={`M${x + 0.5} ${bottom}V${low}`} stroke={edge[kind]} />
      <rect
        x={x - 5.5}
        y={top + 0.5}
        width="12"
        height={Math.max(bottom - top - 1, 0.1)}
        fill={`url(#fill-${kind})`}
        stroke={edge[kind]}
      />
    </g>
  );
};

const Note = ({ x, y, stacked }) => (
  <g transform={`translate(${x} ${y})`}>
    {stacked && <rect x="-9" y="-1" width="9" height="10" fill="#bcdcf4" />}
    {stacked && <rect x="-7" y="-3" width="10" height="10" fill="#7cc0f0" />}
    <rect x="-5" y="-6" width="11" height="12" fill="#45b4f6" />
    <path d="M-3-4h4l3 3v5h-7z" fill="#2a8ad8" stroke="#1d4a78" />
    <path d="M1-4v3h3M-2 1h5M-2 3h5" fill="none" stroke="#1d4a78" />
  </g>
);

const Chart = () => (
  <ChartArea>
    <svg viewBox="1 103 1918 907" role="img" aria-label="ALCOA CORP. 1 día">
      <defs>
        <linearGradient id="fill-g">
          <stop offset="0" stopColor="#33a038" />
          <stop offset="1" stopColor="#055a05" />
        </linearGradient>
        <linearGradient id="fill-r">
          <stop offset="0" stopColor="#c63c3c" />
          <stop offset="1" stopColor="#780606" />
        </linearGradient>
        <linearGradient id="fill-o">
          <stop offset="0" stopColor="#ffae22" />
          <stop offset="1" stopColor="#f28c00" />
        </linearGradient>
        <linearGradient id="fill-last" x2="0" y2="1">
          <stop offset="0" stopColor="#ffee30" />
          <stop offset="1" stopColor="#f0b800" />
        </linearGradient>
        <clipPath id="plot">
          <rect x="1" y="103" width="1869" height="884" />
        </clipPath>
      </defs>

      <g clipPath="url(#plot)">
        {candles.map((c, i) => c[0] !== 'o' && <Candle key={i} data={c} i={i} />)}
        {notes.map(([x, y, stacked]) => <Note key={x} x={x} y={y} stacked={stacked} />)}
        <g fill="none" strokeWidth="5" strokeLinejoin="round">
          <polyline points={toPoints(ema3, 725, 593)} stroke="#77fb77" />
          <polyline points={toPoints(ema9, 728, 575)} stroke="#f00" />
        </g>
        {candles.map((c, i) => c[0] === 'o' && <Candle key={i} data={c} i={i} />)}
        <g fill="none" stroke="#ed1c24" strokeWidth="5">
          {circles.map(([x, y, rx, ry]) => <ellipse key={x} cx={x} cy={y} rx={rx} ry={ry} />)}
          {arrows.map(([x, y, sy, by, h, s]) => (
            <path key={x} d={`M${x} ${y}L${x + h} ${sy}H${x + s}V${by}H${x - s}V${sy}H${x - h}Z`} />
          ))}
        </g>
        <text x="3" y="985" fill="#888" style={{ fontSize: 10 }}>
          ProRealTime.com - Fin de Día - Horario ampliado
        </text>
      </g>

      <path d="M1 987.5H1870M1870.5 103V1010" stroke="#777" />
      {prices.map(p => (
        <g key={p}>
          <path d={`M1871 ${priceY(p) + 0.5}h4`} stroke="#777" />
          {p !== 54 && (
            <text
              x="1877"
              y={priceY(p) + 4}
              fontWeight={p % 10 ? 'normal' : 'bold'}
              style={{ fontSize: p % 10 ? 12 : 13 }}
            >
              {p}
            </text>
          )}
        </g>
      ))}
      <rect x="1875.5" y="640.5" width="43" height="22" fill="url(#fill-last)" stroke="#8a7a20" />
      <text x="1877" y="658" fontWeight="bold" style={{ fontSize: 16 }}>53,90</text>

      {days.map(([x, label, major]) => (
        <g key={x}>
          <path d={`M${x + 0.5} 988v3`} stroke="#777" />
          <text x={x} y="1004" textAnchor="middle" fontWeight={major ? 'bold' : 'normal'} style={{ fontSize: major ? 14 : 12 }}>
            {label}
          </text>
        </g>
      ))}
      <rect x="1851" y="988" width="19" height="22" fill="#1c1c1c" />
      <path d="M1856 995l4 4-4 4M1861 995l4 4-4 4" fill="none" stroke="#bbb" />
    </svg>
  </ChartArea>
);

/* ---------- indicator window ---------- */

const Dialog = styled.section`
  position: absolute;
  left: 987px;
  bottom: 0;
  display: flex;
  flex-direction: column;
  width: 663px;
  border: 1px solid #777;
  background: #000;
`;

const TitleBar = styled.div`
  display: flex;
  height: 29px;
  background: ${barGradient};
  border-bottom: 1px solid #777;
`;

const NameInput = styled.input`
  width: 221px;
  padding: 0 0 0 1px;
  border: 0;
  border-right: 1px solid #5a5a5a;
  outline: 0;
  background: #000;
`;

const Panel = styled.div`
  margin: 10px 7px 8px 8px;
  border: 1px solid #5a5a5a;
  background: #1e1e1e;
`;

const VariablesRow = styled.div`
  display: flex;
  align-items: center;
  gap: 6px;
  height: 29px;
  padding-left: 2px;
  border-bottom: 1px solid #5a5a5a;
`;

const Link = styled.a`
  margin-left: ${p => (p.$gap ? '3px' : 0)};
  color: #aaa4ff;
`;

const EditorTools = styled.div`
  display: flex;
  align-items: center;
  height: 35px;
  background: linear-gradient(#373737, #252525);
  border-bottom: 1px solid #4a4a4a;
`;

const Divider = styled.i`
  width: 1px;
  height: 22px;
  margin: 0 5px 0 6px;
  background: #555;
`;

const Editor = styled.div`
  display: flex;
  background: #000;
  border-bottom: 1px solid #5a5a5a;
`;

const Gutter = styled.ol`
  width: 54px;
  margin: 0;
  padding: 2px 5px 11px 0;
  border-right: 1px solid #5a5a5a;
  background: #1e1e1e;
  list-style: none;
  text-align: right;
  font: 14px/22px "DejaVu Sans", sans-serif;
`;

const Code = styled.pre`
  flex: 1;
  margin: 0;
  padding: 2px 0 11px;
  color: #dcdcdc;
  font: 17px/22px "Liberation Mono", "Courier New", monospace;
`;

const tokenColor = { k: '#6fa8c4', f: '#7fb24f', n: '#cf96d6' };

const Token = styled.span`
  color: ${p => tokenColor[p.$t]};
`;

const Match = styled.mark`
  background: #7b5c3c;
  color: #ddd;
  box-shadow: inset 0 0 0 1px #d8a066;
  padding: 2px 0;
`;

const ApplyRow = styled.div`
  display: flex;
  align-items: center;
  height: 66px;
  padding-left: 12px;
`;

const Segment = styled.button`
  width: ${p => p.$w}px;
  height: 28px;
  padding: 0;
  border: 1px solid ${p => (p.$on ? '#3aa0ff' : '#5a5a5a')};
  border-radius: 2px;
  background: ${p => (p.$on ? 'linear-gradient(#1486e6, #0069d0)' : '#161616')};
`;

const SplitButton = styled.div`
  display: flex;
  height: 36px;
  margin-left: 12px;
  border: 1px solid #5a5a5a;
  border-radius: 2px;
  background: linear-gradient(#222, #121212);

  button {
    display: flex;
    align-items: center;
    gap: 5px;
    padding: 0 12px 0 4px;
    border: 0;
    background: none;
    white-space: nowrap;
  }
  button + button {
    padding: 0 3px;
    border-left: 1px solid #5a5a5a;
  }
`;

const KeepOpen = styled.label`
  display: flex;
  align-items: center;
  gap: 4px;
  margin-left: 16px;
  padding-top: 4px;

  input {
    appearance: none;
    display: grid;
    place-items: center;
    width: 14px;
    height: 14px;
    margin: 0;
    border: 1px solid #777;
    border-radius: 2px;
    background: #111;
  }
  input:checked::after {
    content: '✔';
    font: 12px/12px "DejaVu Sans", sans-serif;
  }
`;

const DialogFooter = styled.div`
  display: flex;
  align-items: center;
  gap: 3px;
  height: 19px;
  padding-left: 4px;
  border-top: 1px solid #777;
  background: linear-gradient(#000, #2c2c2c);
`;

const K = ({ children }) => <Token $t="k">{children}</Token>;
const F = ({ children }) => <Token $t="f">{children}</Token>;
const N = ({ children }) => <Token $t="n">{children}</Token>;

const codeLines = [
  <>ema3 = <F>ExponentialAverage</F><K>[</K><N>3</N><K>]</K>(<K>close</K>)</>,
  <><Match>ema9</Match> = <F>ExponentialAverage</F><K>[</K><N>9</N><K>]</K>(<K>close</K>)</>,
  null,
  <>c1= <K>close CROSSES OVER</K> ema3 <K>and close CROSSES OVER</K> <Match>ema9</Match></>,
  null,
  null,
  null,
  <><K>IF</K>  c1  <K>then</K></>,
  null,
  <>{'   '}<F>DRAWCANDLE</F>(<K>open</K>,<K>close</K>,<K>low</K>,<K>close</K>) <K>COLOURED</K>(<N>255</N>,<N>155</N>,<N>0</N>)</>,
  <K>endif</K>,
  <K>return</K>,
  null,
];

const editorTools = [
  'scissors', 'copyDark', 'paste', '|', 'undo', 'redo', '|', 'magnifier', 'comment', '|', 'fontDown', 'fontUp', '|',
  'bulb', 'fx', 'question', 'printer',
];

const IndicatorWindow = () => {
  const [name, setName] = useState('MiIndicador(18)');
  const [onPrice, setOnPrice] = useState(true);

  return (
    <Dialog>
      <TitleBar>
        <Cell $w={33} $pad="0 7px 0 0"><Icon name="candles" size={20} /></Cell>
        <NameInput aria-label="Nombre" value={name} onChange={e => setName(e.target.value)} />
        <IconButton $w={28} $h={28} aria-label="Ayuda"><Icon name="help" /></IconButton>
        <WindowControls>
          {['minimize', 'maximize', 'close'].map(n => (
            <IconButton key={n} $w={18} $h={28} aria-label={n}><Icon name={n} /></IconButton>
          ))}
        </WindowControls>
      </TitleBar>
      <Panel>
        <VariablesRow>
          <Icon name="wrench" size={20} />
          <b>Variables</b>
          <Link href="#add" $gap>añadir</Link>
        </VariablesRow>
        <EditorTools>
          {editorTools.map((n, i) =>
            n === '|'
              ? <Divider key={i} />
              : <IconButton key={i} $on={n === 'bulb'} aria-label={n}><Icon name={n} size={23} /></IconButton>
          )}
        </EditorTools>
        <Editor>
          <Gutter>
            {codeLines.map((_, i) => <li key={i}>{i + 1}</li>)}
          </Gutter>
          <Code>
            {codeLines.map((line, i) => <React.Fragment key={i}>{line}{'\n'}</React.Fragment>)}
          </Code>
        </Editor>
        <ApplyRow>
          <Segment $w={82} $on={onPrice} onClick={() => setOnPrice(true)}>en precio</Segment>
          <Segment $w={95} $on={!onPrice} onClick={() => setOnPrice(false)}>nuevo panel</Segment>
          <SplitButton>
            <button><Icon name="chartWindow" />Aplicar a ALCOA CORP. - 1 día</button>
            <button aria-label="Más opciones"><Chevron /></button>
          </SplitButton>
          <KeepOpen>
            <input type="checkbox" defaultChecked />
            Mantener ventana abierta
          </KeepOpen>
        </ApplyRow>
      </Panel>
      <DialogFooter>
        <Icon name="film" size={19} />
        <Link href="#video">Formación en vídeo</Link>
      </DialogFooter>
    </Dialog>
  );
};

/* ---------- page ---------- */

const menus = ['Archivo', 'Mostrar', 'Trading', 'Social', 'Objetos', 'Ajustes', 'Ayuda'];

const tools = [
  'pencil', 'pointer', 'loupe', 'ruler', 'move', 'copy', 'tools', 'trash', 'alarm', 'bell', 'node', 'line',
  'greenLine', 'redLine', 'hline', 'greenRay', 'redRay', 'separator', 'channel', 'fibo', 'pitchfork', 'textBox',
  'arrowDown', 'arrowUp', 'check', 'cross', 'ellipse', 'rect', 'triangle', 'peaks', 'cursorBack', 'magnet',
  'cursorLock', 'range', 'wedge', 'arrow', 'hline', 'segment', 'vsegment', 'abc', 'waves', 'regression', 'percent',
  'angle', 'fan', 'hband', 'vband', 'diamond', 'tiltEllipse', 'warning', 'thumbUp', 'thumbDown', 'arrowOutline',
];

const activeTools = ['pointer', 'cursorBack', 'magnet', 'cursorLock'];

const bottomTools = [
  'calendar', 'undoDark', 'redoDark', 'candleTool', 'zoomAxes', 'zoomOut', 'zoomIn', 'keyboardDown',
];

const Select = ({ label, value, bold }) => (
  <Picker $bold={bold}>
    <select aria-label={label}>
      <option>{value}</option>
    </select>
    <Chevron />
  </Picker>
);

const App = () => (
  <Frame>
    <GlobalStyle />
    <MenuBar>
      <Brand>
        <Icon name="candles" size={22} />
        <BrandName>
          <span>ProRealTime</span>
          <small>Complete</small>
        </BrandName>
      </Brand>
      <Menu>
        {menus.map(m => <MenuItem key={m}>{m}</MenuItem>)}
      </Menu>
      <Cell />
      <Cell $w={27}><Icon name="chain" size={22} /></Cell>
      <Search>
        <input type="text" aria-label="Buscar" placeholder="Buscar..." />
        <Icon name="search" size={22} />
      </Search>
      <WindowControls>
        {['adjust', 'dock', 'pin', 'minimize', 'close'].map(n => (
          <IconButton key={n} $w={18} $h={28} aria-label={n}><Icon name={n} /></IconButton>
        ))}
      </WindowControls>
    </MenuBar>

    <Toolbar>
      <ScrollTools aria-label="Anterior"><Chevron d="M5 1L2 4l3 3" color="#777" /></ScrollTools>
      <Tools>
        {tools.map((n, i) => (
          <IconButton key={i} $on={activeTools.includes(n)} aria-label={n}><Icon name={n} /></IconButton>
        ))}
      </Tools>
      <ScrollTools $raised aria-label="Siguiente"><Chevron d="M3 1l3 3-3 3" /></ScrollTools>
      <IconButton $w={42} aria-label="Guardar"><Icon name="floppy" /></IconButton>
      <Select label="Plantilla" value="Definitivo" />
      <PlatformTools>
        {['flag', 'sound', 'lockArrows', 'syncPage', 'keypad'].map(n => (
          <IconButton key={n} $on={n === 'sound'} aria-label={n}><Icon name={n} /></IconButton>
        ))}
      </PlatformTools>
    </Toolbar>

    <ChartHeader>
      <Cell $w={28}><Icon name="candles" size={20} /></Cell>
      <Cell $w={20}><Icon name="chainCheck" size={22} /></Cell>
      <Cell $pad="0 4px 0 5px"><Select bold label="Valor" value="AA" /></Cell>
      <Cell $pad="0 5px 0 4px"><Select bold label="Periodo" value="1 día" /></Cell>
      <Cell $pad="0 3px 0 4px"><Select bold label="Unidades" value="200 unidades" /></Cell>
      <Cell $pad="0 4px 0 5px"><Icon name="indicators" /><b>Indicadores</b></Cell>
      <Cell $w={17}><Chevron /></Cell>
      <Quote>
        <Icon name="info" size={20} />
        <span>ALCOA CORP.</span>
        <Last>53,90</Last>
        <Change>-3,14 %</Change>
        <b>6 mar 2023</b>
        <Icon name="ring" size={14} />
      </Quote>
      <WindowControls>
        <Cell />
        <Cell $w={28} $pad="0">
          <IconButton $w={27} $h={28} aria-label="Actualizar"><Icon name="refresh" size={20} /></IconButton>
        </Cell>
        {['minimize', 'maximize', 'close'].map(n => (
          <IconButton key={n} $w={18} $h={28} aria-label={n}><Icon name={n} /></IconButton>
        ))}
      </WindowControls>
    </ChartHeader>

    <Chart />

    <BottomBar>
      <IconButton $w={34} $h={28} aria-label="Dibujar"><Icon name="chartPen" size={22} /></IconButton>
      <IconButton $w={29} $h={28} aria-label="Compartir"><Icon name="share" size={22} /></IconButton>
      <Analyze><Icon name="brackets" />Analizar</Analyze>
      <IconButton $w={28} $h={28} aria-label="Chat"><Icon name="chat" size={22} /></IconButton>
      <IconButton $h={28} aria-label="Ventanas"><Icon name="windows" /></IconButton>
      <IconButton $w={18} $h={28} aria-label="Contraer">
        <Svg viewBox="0 0 10 10" width="10" height="10">
          <path d="M5 1L1 5l4 4M9 1L5 5l4 4" fill="none" stroke="#bbb" />
        </Svg>
      </IconButton>
      <TrackButton aria-label="Atrás"><Chevron d="M5 1L2 4l3 3" /></TrackButton>
      <Track><Thumb /></Track>
      <TrackButton aria-label="Adelante"><Chevron d="M3 1l3 3-3 3" /></TrackButton>
      {bottomTools.map(n => (
        <IconButton key={n} $h={28} aria-label={n}><Icon name={n} /></IconButton>
      ))}
    </BottomBar>

    <IndicatorWindow />
  </Frame>
);

export default App;
